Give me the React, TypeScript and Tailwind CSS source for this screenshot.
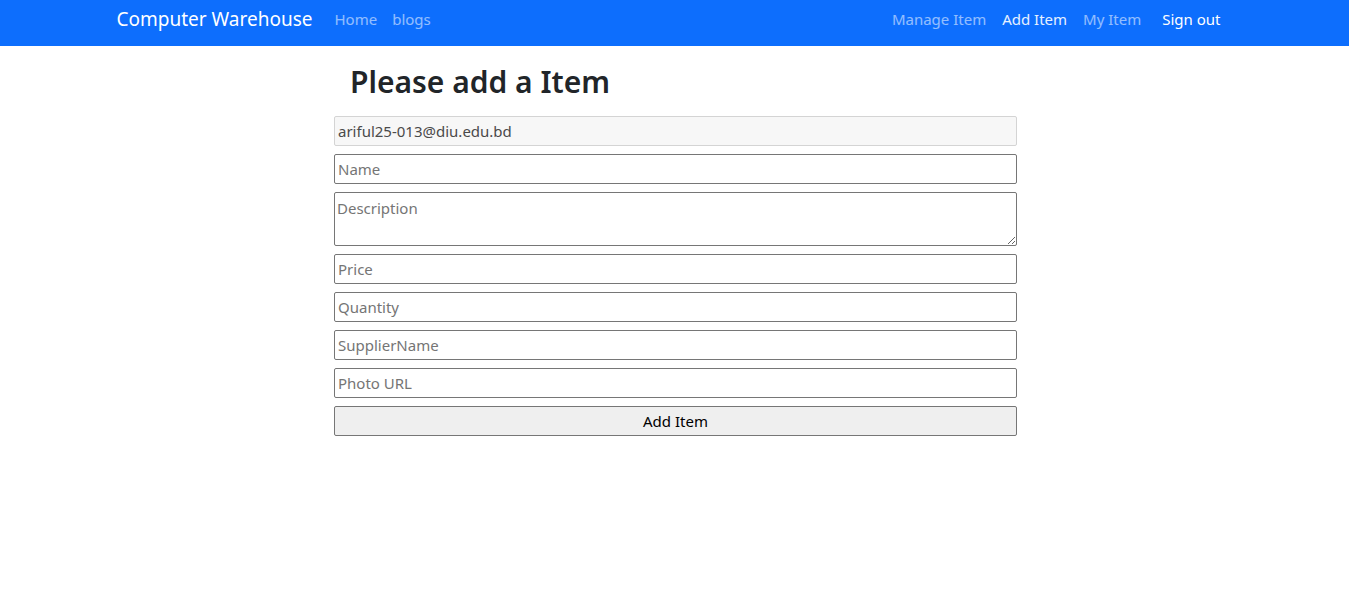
const fields = ["Name", "Description", "Price", "Quantity", "SupplierName", "Photo URL"];

const AddItem = () => {
  return (
    <div className="min-h-screen bg-white font-['Noto_Sans','Open_Sans',sans-serif] text-[#212529]">
      {/* Navbar */}
      <nav className="h-[46px] bg-[#0d6efd]">
        <div className="mx-auto flex h-full w-[1140px] items-center px-3 pb-2">
          <a className="mr-[22px] text-[19px] text-white">Computer Warehouse</a>
          <div className="flex gap-[15px] text-[15px] text-white/55">
            <a>Home</a>
            <a>blogs</a>
          </div>
          <div className="ml-auto flex items-center gap-4 pr-3 text-[15px] text-white/55">
            <a>Manage Item</a>
            <a className="text-white/90">Add Item</a>
            <a>My Item</a>
            <a className="ml-[5px] text-white">Sign out</a>
          </div>
        </div>
      </nav>

      {/* Form */}
      <div className="ml-[334px] w-[683px] pt-[17px]">
        <h2 className="ml-4 text-[30px] font-semibold leading-[38px]">Please add a Item</h2>
        <form className="mt-[15px] flex flex-col gap-2">
          <input
            disabled
            value="ariful25-013@diu.edu.bd"
            className="h-[30px] rounded-[2px] border border-[#d4d4d4] bg-[#f7f7f7] px-[3px] text-[15px] text-[#4a4a4a]"
          />
          {fields.map((f) =>
            f === "Description" ? (
              <textarea
                key={f}
                placeholder={f}
                className="h-[54px] rounded-[2px] border border-[#767676] px-[2px] py-[3px] text-[15px] leading-[24px] placeholder:text-[#757575]"
              />
            ) : (
              <input
                key={f}
                placeholder={f}
                className="h-[30px] rounded-[2px] border border-[#767676] px-[3px] text-[15px] placeholder:text-[#757575]"
              />
            )
          )}
          <button
            type="button"
            className="h-[30px] rounded-[2px] border border-[#767676] bg-[#efefef] text-[15px] text-black"
          >
            Add Item
          </button>
        </form>
      </div>
    </div>
  );
};

export default AddItem;
